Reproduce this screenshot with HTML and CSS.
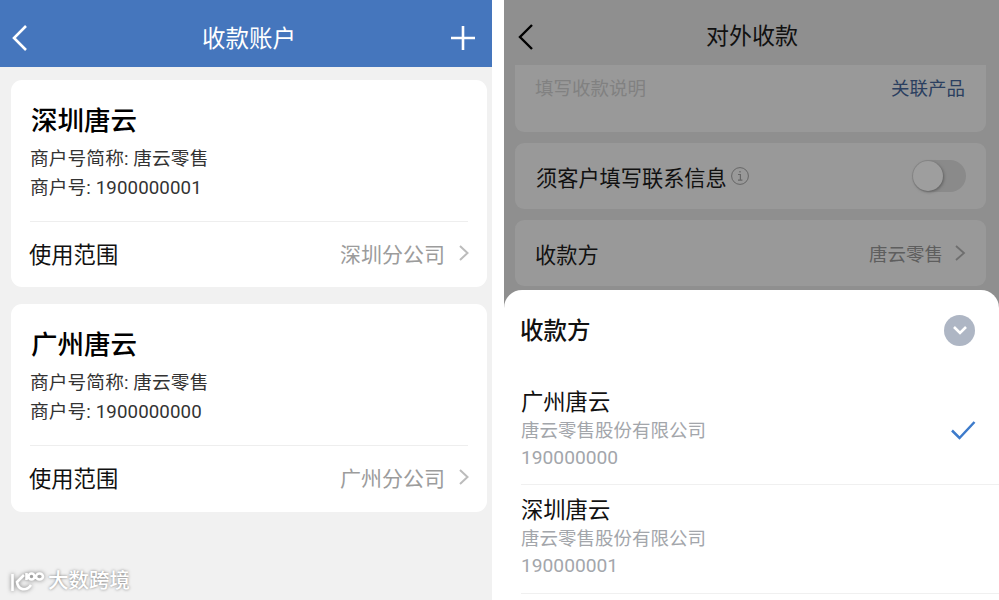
FILE: index.html
```html
<!DOCTYPE html>
<html lang="zh-CN">
<head>
    <meta charset="UTF-8">
    <title>收款账户</title>
    <link rel="stylesheet" href="styles.css">
</head>
<body>
    <div class="screens">
        <div class="screen accounts">
            <div class="blue-bar">
                <svg class="bar-icon" width="18" height="28" viewBox="0 0 18 28"><path d="M15 2 L3 14 L15 26" fill="none" stroke="#fff" stroke-width="2.6"/></svg>
                <div class="bar-title">收款账户</div>
                <svg class="bar-icon" width="26" height="26" viewBox="0 0 26 26"><path d="M13 1 V25 M1 13 H25" fill="none" stroke="#fff" stroke-width="2.6"/></svg>
            </div>
            <div class="card-list">
                <div class="card">
                    <div class="card-name">深圳唐云</div>
                    <div class="card-line">商户号简称: 唐云零售</div>
                    <div class="card-line">商户号: 1900000001</div>
                    <div class="card-foot">
                        <span class="foot-label">使用范围</span>
                        <span class="foot-value">深圳分公司</span>
                        <svg width="12" height="18" viewBox="0 0 12 18"><path d="M2 2 L9.5 9 L2 16" fill="none" stroke="#bcbcbc" stroke-width="2"/></svg>
                    </div>
                </div>
                <div class="card">
                    <div class="card-name">广州唐云</div>
                    <div class="card-line">商户号简称: 唐云零售</div>
                    <div class="card-line">商户号: 1900000000</div>
                    <div class="card-foot">
                        <span class="foot-label">使用范围</span>
                        <span class="foot-value">广州分公司</span>
                        <svg width="12" height="18" viewBox="0 0 12 18"><path d="M2 2 L9.5 9 L2 16" fill="none" stroke="#bcbcbc" stroke-width="2"/></svg>
                    </div>
                </div>
            </div>
            <div class="watermark">
                <svg width="38" height="24" viewBox="0 0 38 24"><path d="M3.5 5 V22 M15 6 L8 13 C9 21 17 23 22 16 M17.5 4 V11 M19.5 7.5 a3 3 0 1 0 6 0 a3 3 0 1 0 -6 0 M27 7.5 a3.5 3 0 1 0 7 0 a3.5 3 0 1 0 -7 0" fill="none" stroke="#fff" stroke-width="2.6"/></svg>
                <span>大数跨境</span>
            </div>
        </div>
        <div class="screen payment">
            <div class="gray-bar">
                <svg class="back" width="18" height="28" viewBox="0 0 18 28"><path d="M15 2 L3 14 L15 26" fill="none" stroke="#000" stroke-width="2.4"/></svg>
                <div class="gray-title">对外收款</div>
            </div>
            <div class="dim-list">
                <div class="dim-card note">
                    <span class="placeholder">填写收款说明</span>
                    <span class="link">关联产品</span>
                </div>
                <div class="dim-card">
                    <span class="dim-label">须客户填写联系信息</span>
                    <svg class="info" width="20" height="20" viewBox="0 0 20 20"><circle cx="10" cy="10" r="8.4" fill="none" stroke="#666" stroke-width="1"/><path d="M8 8.5 H10.4 V14 M8 14.2 H12.4 M10 5 V6.4" fill="none" stroke="#666" stroke-width="1.2"/></svg>
                    <span class="toggle"><span class="knob"></span></span>
                </div>
                <div class="dim-card payee">
                    <span class="dim-label">收款方</span>
                    <span class="dim-value">唐云零售</span>
                    <svg width="12" height="18" viewBox="0 0 12 18"><path d="M2 2 L10 9 L2 16" fill="none" stroke="#6e6e6e" stroke-width="1.8"/></svg>
                </div>
            </div>
            <div class="sheet">
                <div class="sheet-head">
                    <div class="sheet-title">收款方</div>
                    <span class="close"><svg width="18" height="12" viewBox="0 0 18 12"><path d="M3 3 L9 9 L15 3" fill="none" stroke="#fff" stroke-width="2.6"/></svg></span>
                </div>
                <div class="option option-first">
                    <div class="option-text">
                        <div class="option-name">广州唐云</div>
                        <div class="option-sub">唐云零售股份有限公司</div>
                        <div class="option-num">190000000</div>
                    </div>
                    <svg class="tick" width="26" height="20" viewBox="0 0 26 20"><path d="M2 10.5 L9.5 18 L24.5 2" fill="none" stroke="#3d7bcb" stroke-width="2.5"/></svg>
                </div>
                <div class="option option-next">
                    <div class="option-text">
                        <div class="option-name">深圳唐云</div>
                        <div class="option-sub">唐云零售股份有限公司</div>
                        <div class="option-num">190000001</div>
                    </div>
                </div>
            </div>
        </div>
    </div>
</body>
</html>
```

FILE: styles.css
```css
html, body {
    margin: 0;
    height: 600px;
    overflow: hidden;
    background: #fff;
    font-family: Roboto, "Noto Sans CJK SC", sans-serif;
}
.screens {
    display: flex;
    justify-content: space-between;
    height: 600px;
}
.screen {
    position: relative;
    height: 600px;
    overflow: hidden;
}

/* left phone */
.accounts {
    width: 492px;
    background: #f1f1f1;
}
.blue-bar {
    display: flex;
    align-items: center;
    justify-content: space-between;
    height: 67px;
    padding: 8px 16px 0 11px;
    box-sizing: border-box;
    background: #4576bd;
}
.bar-title {
    margin: 2px 0 0 19px;
    color: #fff;
    font-size: 23.5px;
    line-height: 30px;
}
.card-list {
    display: flex;
    flex-direction: column;
    gap: 17px;
    padding: 13px 5px 0 11px;
}
.card {
    height: 207px;
    padding: 0 19px;
    box-sizing: border-box;
    background: #fff;
    border-radius: 11px;
}
.card + .card {
    height: 208px;
}
.card-name {
    padding: 23px 0 6px 1px;
    font-size: 26.5px;
    line-height: 36px;
    font-weight: 500;
    color: #000;
}
.card-line {
    font-size: 18.7px;
    line-height: 29px;
    letter-spacing: 0.1px;
    color: #333;
}
.card-foot {
    display: flex;
    align-items: center;
    height: 67px;
    margin-top: 18px;
    padding-bottom: 4px;
    box-sizing: border-box;
    border-top: 1px solid #eeeeee;
}
.foot-label {
    flex: 1;
    margin-left: -1px;
    font-size: 22.3px;
    color: #111;
}
.foot-value {
    margin-right: 13px;
    font-size: 21px;
    color: #9c9c9c;
}
.card-foot svg {
    margin-right: -2px;
}
.watermark {
    position: absolute;
    left: 9px;
    top: 568px;
    display: flex;
    align-items: center;
    gap: 1px;
    color: #fff;
    font-size: 20.5px;
    line-height: 26px;
    font-weight: 500;
    text-shadow: 0 0 3px #777;
}
.watermark svg {
    filter: drop-shadow(0 0 2px #777);
}

/* right phone, dimmed behind the sheet */
.payment {
    width: 495px;
    background: #8f8f8f;
}
.gray-bar {
    position: relative;
    display: flex;
    align-items: center;
    justify-content: center;
    height: 65px;
    padding-top: 8px;
    box-sizing: border-box;
}
.back {
    position: absolute;
    left: 13px;
    top: 23px;
}
.gray-title {
    font-size: 23px;
    line-height: 30px;
    color: #111;
    margin-left: 1px;
}
.dim-list {
    display: flex;
    flex-direction: column;
    gap: 11px;
    padding: 0 13px 0 11px;
}
.dim-card {
    display: flex;
    align-items: center;
    height: 66px;
    padding: 0 20px 0 21px;
    background: #999999;
    border-radius: 9px;
}
.payee {
    padding-left: 20px;
}
.note {
    height: 67px;
    align-items: flex-start;
    justify-content: space-between;
    padding: 10px 21px 0 20px;
    box-sizing: border-box;
    border-radius: 0 0 9px 9px;
}
.placeholder {
    font-size: 18.5px;
    line-height: 28px;
    color: #818181;
}
.link {
    font-size: 18.5px;
    line-height: 28px;
    color: #2b3f60;
}
.dim-label {
    font-size: 21.2px;
    color: #111;
}
.info {
    margin-left: 3px;
    flex: none;
}
.toggle {
    display: block;
    width: 54px;
    height: 32px;
    margin-left: auto;
    background: #8a8a8a;
    border-radius: 16px;
}
.knob {
    display: block;
    width: 30px;
    height: 30px;
    margin: 1px;
    background: #9e9e9e;
    border-radius: 50%;
    box-shadow: 1px 1px 3px #5f5f5f;
}
.dim-value {
    margin-left: auto;
    margin-right: 11px;
    font-size: 18.5px;
    color: #5e5e5e;
}

/* bottom sheet */
.sheet {
    position: absolute;
    left: 0;
    right: 0;
    top: 290px;
    bottom: 0;
    padding-left: 17px;
    background: #fff;
    border-radius: 18px 18px 0 0;
}
.sheet-head {
    display: flex;
    align-items: center;
    justify-content: space-between;
    height: 80px;
    padding-right: 24px;
}
.sheet-title {
    margin: 0 0 3px -1px;
    font-size: 23.5px;
    font-weight: 500;
    color: #111;
}
.close {
    display: flex;
    align-items: center;
    justify-content: center;
    width: 31px;
    height: 31px;
    background: #aeb6c4;
    border-radius: 50%;
}
.option {
    display: flex;
    align-items: center;
    justify-content: space-between;
    padding-right: 23px;
    box-sizing: border-box;
    border-bottom: 1px solid #f0f0f0;
}
.option-first {
    height: 115px;
    padding-top: 3px;
}
.option-next {
    height: 109px;
    padding-bottom: 4px;
}
.tick {
    margin-top: 2px;
}
.option-name {
    font-size: 22.3px;
    line-height: 31px;
    color: #111;
}
.option-sub {
    font-size: 18.5px;
    line-height: 27px;
    color: #a3a6ab;
}
.option-num {
    font-size: 19.2px;
    line-height: 26px;
    color: #a3a6ab;
}
```
